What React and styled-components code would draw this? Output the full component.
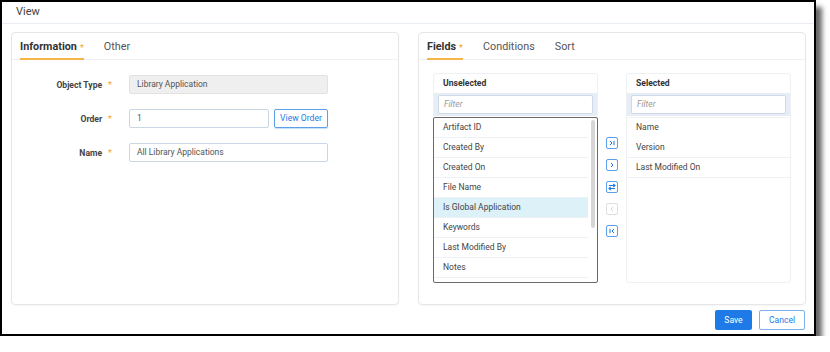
import React from 'react'
import styled, { createGlobalStyle } from 'styled-components'

const GlobalStyle = createGlobalStyle`
  html, body {
    margin: 0;
    padding: 0;
    background: #ffffff;
    font-family: Roboto, "Liberation Sans", Arial, sans-serif;
  }
`;

const unselected = [
  'Artifact ID',
  'Created By',
  'Created On',
  'File Name',
  'Is Global Application',
  'Keywords',
  'Last Modified By',
  'Notes',
]

const selected = ['Name', 'Version', 'Last Modified On']

const App = () => {
  return (
    <>
      <GlobalStyle />
      <Frame>
        <Header>View</Header>
        <Body>
          <Panel>
            <Tabs>
              <Tab active>Information<Star>*</Star></Tab>
              <Tab>Other</Tab>
            </Tabs>
            <Form>
              <Row>
                <Label>Object Type<Star>*</Star></Label>
                <Input disabled width={199}>Library Application</Input>
              </Row>
              <Row>
                <Label>Order<Star>*</Star></Label>
                <Input width={140}>1</Input>
                <OutlineButton>View Order</OutlineButton>
              </Row>
              <Row>
                <Label>Name<Star>*</Star></Label>
                <Input width={199}>All Library Applications</Input>
              </Row>
            </Form>
          </Panel>

          <Panel>
            <Tabs>
              <Tab active>Fields<Star>*</Star></Tab>
              <Tab>Conditions</Tab>
              <Tab>Sort</Tab>
            </Tabs>
            <Picker>
              <ListBox>
                <ListHead>Unselected</ListHead>
                <FilterRow><FilterInput>Filter</FilterInput></FilterRow>
                <Items focused>
                  {unselected.map((name) => (
                    <Item key={name} highlight={name === 'Is Global Application'}>{name}</Item>
                  ))}
                  <ScrollTrack><ScrollThumb /></ScrollTrack>
                </Items>
              </ListBox>

              <Moves>
                <MoveButton>
                  <svg width="10" height="10" viewBox="0 0 10 10">
                    <path d="M3 3 L5 5 L3 7" fill="none" stroke="#1d7ae6" strokeWidth="1" />
                    <path d="M7 2.8 V7.2" stroke="#1d7ae6" strokeWidth="1" />
                  </svg>
                </MoveButton>
                <MoveButton>
                  <svg width="10" height="10" viewBox="0 0 10 10">
                    <path d="M4 3 L6 5 L4 7" fill="none" stroke="#1d7ae6" strokeWidth="1" />
                  </svg>
                </MoveButton>
                <MoveButton>
                  <svg width="10" height="10" viewBox="0 0 10 10">
                    <path d="M2 3.5 H8 M6.3 2 L8 3.5 L6.3 5" fill="none" stroke="#1d7ae6" strokeWidth="1.1" />
                    <path d="M8 6.5 H2 M3.7 5 L2 6.5 L3.7 8" fill="none" stroke="#1d7ae6" strokeWidth="1.1" />
                  </svg>
                </MoveButton>
                <MoveButton disabled>
                  <svg width="10" height="10" viewBox="0 0 10 10">
                    <path d="M6 3 L4 5 L6 7" fill="none" stroke="#d4d4d4" strokeWidth="1" />
                  </svg>
                </MoveButton>
                <MoveButton>
                  <svg width="10" height="10" viewBox="0 0 10 10">
                    <path d="M7 3 L5 5 L7 7" fill="none" stroke="#1d7ae6" strokeWidth="1" />
                    <path d="M3 2.8 V7.2" stroke="#1d7ae6" strokeWidth="1" />
                  </svg>
                </MoveButton>
              </Moves>

              <ListBox>
                <ListHead>Selected</ListHead>
                <FilterRow><FilterInput>Filter</FilterInput></FilterRow>
                <Items>
                  {selected.map((name, i) => (
                    <Item key={name} plain={i === 0}>{name}</Item>
                  ))}
                </Items>
              </ListBox>
            </Picker>
          </Panel>
        </Body>
        <Footer>
          <PrimaryButton>Save</PrimaryButton>
          <SecondaryButton>Cancel</SecondaryButton>
        </Footer>
      </Frame>
    </>
  )
}

const Frame = styled.div`
  box-sizing: border-box;
  width: 816px;
  height: 336px;
  border: 2px solid #000;
  background: #fff;
  box-shadow: 6px 7px 5px rgba(0, 0, 0, 0.6);
  display: flex;
  flex-direction: column;
  overflow: hidden;
  color: #444;
`;

const Header = styled.div`
  height: 21px;
  line-height: 20px;
  padding-left: 14px;
  font-size: 11px;
  color: #444;
  border-bottom: 1px solid #e8eef4;
`;

const Body = styled.div`
  display: flex;
  gap: 19px;
  padding: 8px 0 0 9px;
`;

const Panel = styled.div`
  box-sizing: border-box;
  width: 388px;
  height: 273px;
  border: 1px solid #e6e6e6;
  border-radius: 4px;
  box-shadow: 0 1px 2px rgba(0, 0, 0, 0.04);
`;

const Tabs = styled.div`
  display: flex;
  gap: 20px;
  height: 26px;
  padding-left: 8px;
  border-bottom: 1px solid #edf0f4;
`;

const Tab = styled.div`
  display: flex;
  align-items: center;
  font-size: 10.8px;
  font-weight: ${(p) => (p.active ? 700 : 400)};
  color: ${(p) => (p.active ? '#333' : '#555')};
  border-bottom: 2px solid ${(p) => (p.active ? '#f5b54a' : 'transparent')};
  margin-bottom: -1px;
  padding-top: 1px;
`;

const Star = styled.span`
  color: #f5a623;
  font-weight: 400;
  font-size: 9px;
  margin-left: 3px;
  align-self: flex-start;
  margin-top: 9px;
`;

const Form = styled.div`
  display: flex;
  flex-direction: column;
  gap: 15px;
  padding-top: 15px;
`;

const Row = styled.div`
  display: flex;
  align-items: center;
  gap: 5px;
`;

const Label = styled.div`
  width: 100px;
  margin-right: 12px;
  display: flex;
  justify-content: flex-end;
  font-size: 8.6px;
  font-weight: 700;
  color: #444;
  & > span {
    margin-top: 0;
    margin-left: 6px;
    align-self: center;
  }
`;

const Input = styled.div`
  box-sizing: border-box;
  width: ${(p) => p.width}px;
  height: 19px;
  line-height: 17px;
  padding-left: 7px;
  font-size: 8.5px;
  color: #555;
  border: 1px solid ${(p) => (p.disabled ? '#e2e2e2' : '#c9d6e6')};
  border-radius: 2px;
  background: ${(p) => (p.disabled ? '#efefef' : '#fff')};
`;

const OutlineButton = styled.div`
  box-sizing: border-box;
  width: 54px;
  height: 19px;
  line-height: 17px;
  text-align: center;
  font-size: 8.6px;
  color: #1d7ae6;
  border: 1px solid #5d9fe8;
  border-radius: 2px;
  box-shadow: 0 1px 1px rgba(29, 122, 230, 0.25);
`;

const Picker = styled.div`
  display: flex;
  align-items: flex-start;
  padding: 13px 0 0 14px;
`;

const ListBox = styled.div`
  box-sizing: border-box;
  width: 165px;
  height: 210px;
  border: 1px solid #eef0f3;
  border-radius: 3px;
  display: flex;
  flex-direction: column;
`;

const ListHead = styled.div`
  height: 19px;
  line-height: 19px;
  padding-left: 9px;
  font-size: 8.6px;
  font-weight: 700;
  color: #333;
`;

const FilterRow = styled.div`
  background: #e6edf6;
  padding: 2px 4px 2px 4px;
`;

const FilterInput = styled.div`
  box-sizing: border-box;
  height: 19px;
  line-height: 17px;
  padding-left: 5px;
  background: #fff;
  border: 1px solid #cfdbe9;
  border-radius: 2px;
  font-size: 8.5px;
  font-style: italic;
  color: #9a9a9a;
`;

const Items = styled.div`
  position: relative;
  flex: 1;
  box-sizing: border-box;
  margin: ${(p) => (p.focused ? '1px -1px -1px' : '1px 0 0')};
  border: ${(p) => (p.focused ? '1px solid #6a6a6a' : 'none')};
  border-top: ${(p) => (p.focused ? '1px solid #6a6a6a' : '1px solid #eef0f3')};
  border-radius: 2px;
  padding-right: ${(p) => (p.focused ? '9px' : '0')};
  overflow: hidden;
`;

const Item = styled.div`
  box-sizing: border-box;
  height: 20px;
  line-height: 19px;
  padding-left: 9px;
  font-size: 8.5px;
  color: #444;
  background: ${(p) => (p.highlight ? '#dcf1f8' : 'transparent')};
  border-bottom: 1px solid ${(p) => (p.plain ? 'transparent' : '#edf0f4')};
`;

const ScrollTrack = styled.div`
  position: absolute;
  top: 2px;
  right: 2px;
  bottom: 2px;
  width: 4px;
`;

const ScrollThumb = styled.div`
  height: 108px;
  border-radius: 2px;
  background: #d6d6d6;
`;

const Moves = styled.div`
  width: 28px;
  display: flex;
  flex-direction: column;
  align-items: center;
  gap: 10px;
  padding-top: 64px;
`;

const MoveButton = styled.div`
  box-sizing: border-box;
  width: 12px;
  height: 12px;
  border: 1px solid ${(p) => (p.disabled ? '#dedede' : '#5d9fe8')};
  border-radius: 2px;
  display: flex;
  align-items: center;
  justify-content: center;
  svg {
    display: block;
  }
`;

const Footer = styled.div`
  display: flex;
  justify-content: flex-end;
  gap: 7px;
  padding: 5px 9px 0 0;
`;

const PrimaryButton = styled.div`
  box-sizing: border-box;
  width: 37px;
  height: 20px;
  line-height: 20px;
  text-align: center;
  font-size: 8.6px;
  color: #fff;
  background: #1d7ae6;
  border-radius: 2px;
`;

const SecondaryButton = styled.div`
  box-sizing: border-box;
  width: 46px;
  height: 20px;
  line-height: 18px;
  text-align: center;
  font-size: 8.6px;
  color: #1d7ae6;
  background: #fff;
  border: 1px solid #7fb2ec;
  border-radius: 2px;
`;

export default App
